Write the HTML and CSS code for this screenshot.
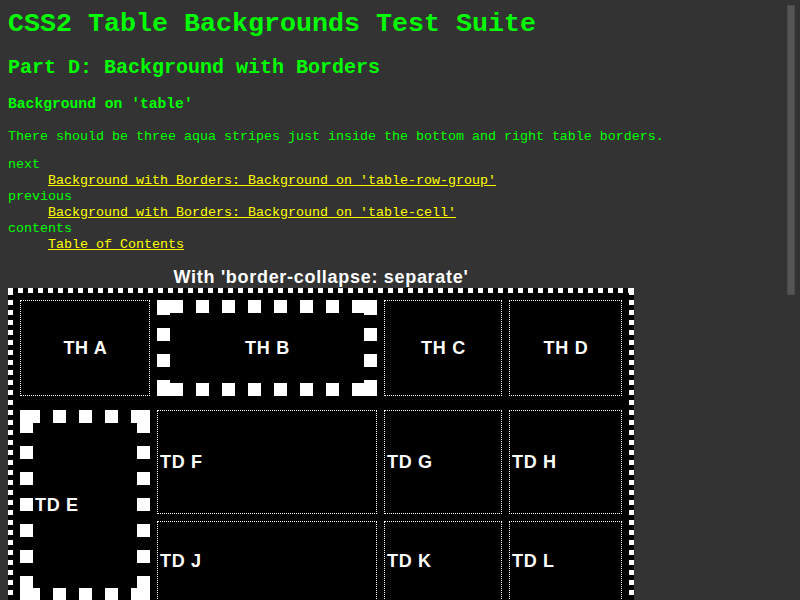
FILE: index.html
```html
<!DOCTYPE html>
<html lang="en">
<head>
<meta charset="utf-8">
<title>CSS2 Table Backgrounds Test Suite</title>
<link rel="stylesheet" href="styles.css">
</head>
<body>
<h1 class="title">CSS2 Table Backgrounds Test Suite</h1>
<h2 class="part">Part D: Background with Borders</h2>
<h3 class="test">Background on 'table'</h3>
<p class="desc">There should be three aqua stripes just inside the bottom and right table borders.</p>
<dl class="nav">
  <dt>next</dt>
  <dd><a href="#">Background with Borders: Background on 'table-row-group'</a></dd>
  <dt>previous</dt>
  <dd><a href="#">Background with Borders: Background on 'table-cell'</a></dd>
  <dt>contents</dt>
  <dd><a href="#">Table of Contents</a></dd>
</dl>
<div class="figure">
  <div class="caption">With 'border-collapse: separate'</div>
  <div class="grid sqdot outer">
    <div class="cell th">TH A</div>
    <div class="cell th sqdot thb">TH B</div>
    <div class="cell th">TH C</div>
    <div class="cell th">TH D</div>
    <div class="cell td sqdot tde">TD E</div>
    <div class="cell td">TD F</div>
    <div class="cell td">TD G</div>
    <div class="cell td">TD H</div>
    <div class="cell td">TD J</div>
    <div class="cell td">TD K</div>
    <div class="cell td">TD L</div>
  </div>
</div>
<div class="scrollthumb" aria-hidden="true"></div>
</body>
</html>
```
FILE: styles.css
```css
html {
  background: #333333;
}

body {
  margin: 8px;
  font-family: "Liberation Mono", "Courier New", monospace;
  font-size: 13.33px;
  line-height: 16px;
  color: #00ff00;
}

.title {
  margin: 1px 0 0;
  font-size: 26.67px;
  line-height: 30px;
  font-weight: bold;
}

.part {
  margin: 18px 0 0;
  font-size: 20px;
  line-height: 22px;
  font-weight: bold;
}

.test {
  margin: 17px 0 0;
  font-size: 14.67px;
  line-height: 17px;
  font-weight: bold;
}

.desc {
  margin: 16px 0 0;
}

.nav {
  margin: 12px 0 0;
}

.nav dt {
  margin: 0;
}

.nav dd {
  margin: 0 0 0 40px;
}

.nav a {
  color: #ffff00;
  text-decoration: underline;
}

.figure {
  margin-top: 13px;
  width: 626px;
}

.caption {
  font-family: "Liberation Sans", Arial, sans-serif;
  font-weight: bold;
  font-size: 18px;
  letter-spacing: 0.7px;
  line-height: 22px;
  color: #ffffff;
  text-align: center;
}

/* square-dotted border drawn with background layers */
.sqdot {
  --w: 13px;
  --hx: 0px;
  --vy: 0px;
  border: var(--w) solid transparent;
  background-color: #000000;
  background-origin: border-box;
  background-clip: border-box;
  background-image:
    linear-gradient(#fff, #fff),
    linear-gradient(#fff, #fff),
    linear-gradient(#fff, #fff),
    linear-gradient(#fff, #fff),
    linear-gradient(to right, #fff 50%, transparent 50%),
    linear-gradient(to right, #fff 50%, transparent 50%),
    linear-gradient(to bottom, #fff 50%, transparent 50%),
    linear-gradient(to bottom, #fff 50%, transparent 50%);
  background-size:
    var(--w) var(--w),
    var(--w) var(--w),
    var(--w) var(--w),
    var(--w) var(--w),
    calc(var(--w) * 2) var(--w),
    calc(var(--w) * 2) var(--w),
    var(--w) calc(var(--w) * 2),
    var(--w) calc(var(--w) * 2);
  background-repeat:
    no-repeat, no-repeat, no-repeat, no-repeat,
    repeat-x, repeat-x, repeat-y, repeat-y;
  background-position:
    left top,
    right top,
    left bottom,
    right bottom,
    var(--hx) top,
    var(--hx) bottom,
    left var(--vy),
    right var(--vy);
}

.outer {
  --w: 5px;
  --hx: 0px;
  --vy: 2px;
  box-sizing: border-box;
  width: 626px;
  padding: 7px;
  display: grid;
  grid-template-columns: 130px 220px 118px 113px;
  grid-template-rows: 103px 104px 80px;
  column-gap: 7px;
  row-gap: 7px;
}

.cell {
  box-sizing: border-box;
  display: flex;
  align-items: center;
  font-family: "Liberation Sans", Arial, sans-serif;
  font-weight: bold;
  font-size: 18px;
  letter-spacing: 0.7px;
  line-height: 21px;
  color: #ffffff;
  border: 1px dotted #ffffff;
  background-color: #000000;
}

.th {
  justify-content: center;
  margin-bottom: 7px;
  padding-left: 1px;
}

.td {
  justify-content: flex-start;
  padding: 0 2px;
}

.thb {
  --w: 13px;
  --hx: 13px;
  --vy: 2px;
  border: 13px solid transparent;
}

.tde {
  --w: 13px;
  --hx: 7px;
  --vy: 10px;
  border: 13px solid transparent;
  grid-row: span 2;
}

/* scrollbar thumb of the browser window, drawn over the page */
.scrollthumb {
  position: fixed;
  top: 5px;
  right: 5px;
  box-sizing: border-box;
  width: 8px;
  height: 290px;
  background: #555555;
  border: 1px solid #4a4a4a;
}
```
